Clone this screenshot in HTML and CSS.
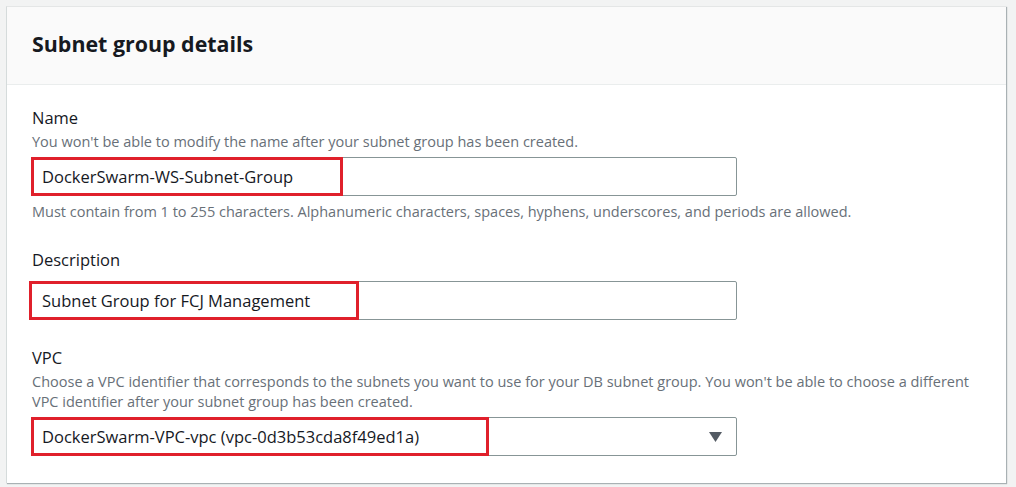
FILE: index.html
```html
<!DOCTYPE html>
<html>
<head>
<meta charset="utf-8">
<link rel="stylesheet" href="styles.css">
</head>
<body>
<div class="page">
  <section class="card">
    <header class="card-header">
      <h2 class="title">Subnet group details</h2>
    </header>
    <div class="card-body">
      <div class="field">
        <div class="label">Name</div>
        <div class="desc">You won't be able to modify the name after your subnet group has been created.</div>
        <div class="input">
          <span class="value">DockerSwarm-WS-Subnet-Group</span>
          <span class="mark mark-name"></span>
        </div>
        <div class="constraint">Must contain from 1 to 255 characters. Alphanumeric characters, spaces, hyphens, underscores, and periods are allowed.</div>
      </div>
      <div class="field">
        <div class="label">Description</div>
        <div class="input">
          <span class="value">Subnet Group for FCJ Management</span>
          <span class="mark mark-desc"></span>
        </div>
      </div>
      <div class="field">
        <div class="label">VPC</div>
        <div class="desc">Choose a VPC identifier that corresponds to the subnets you want to use for your DB subnet group. You won't be able to choose a different VPC identifier after your subnet group has been created.</div>
        <div class="input select">
          <span class="value">DockerSwarm-VPC-vpc (vpc-0d3b53cda8f49ed1a)</span>
          <svg class="caret" width="13" height="10" viewBox="0 0 13 10"><path d="M0 0H13L6.5 10Z" fill="#545b64"/></svg>
          <span class="mark mark-vpc"></span>
        </div>
      </div>
    </div>
  </section>
</div>
</body>
</html>
```

FILE: styles.css
```css
html, body {
  margin: 0;
  padding: 0;
  background: #f2f3f3;
}
body {
  font-family: "Open Sans", "Noto Sans", "Liberation Sans", sans-serif;
  color: #16191f;
}
.page {
  padding: 6px 10px 4px 6px;
}
.card {
  width: 1000px;
  height: 477px;
  box-sizing: border-box;
  background: #ffffff;
  border-top: 1px solid #e4e6e6;
  border-left: 1px solid #d5dbdb;
  box-shadow: 1px 1px 1px 0 rgba(0, 28, 36, 0.3);
  display: flex;
  flex-direction: column;
}
.card-header {
  height: 78px;
  box-sizing: border-box;
  background: #fafafa;
  border-bottom: 1px solid #eaeded;
  padding: 23px 0 0 25px;
}
.title {
  margin: 0;
  font-size: 21.4px;
  font-weight: 700;
  line-height: 28px;
  color: #16191f;
}
.card-body {
  padding: 22px 24px 0 24px;
  display: flex;
  flex-direction: column;
  gap: 27px;
}
.field {
  display: flex;
  flex-direction: column;
  width: 952px;
}
.label {
  font-size: 16.5px;
  line-height: 22px;
  color: #16191f;
  padding-left: 1px;
}
.desc {
  font-size: 14.5px;
  line-height: 20px;
  color: #687078;
  margin-top: 3px;
  margin-bottom: 5px;
  padding-left: 1px;
}
.constraint {
  font-size: 14.5px;
  line-height: 20px;
  color: #687078;
  margin-top: 6px;
  padding-left: 1px;
}
.input {
  position: relative;
  width: 706px;
  height: 39px;
  box-sizing: border-box;
  border: 1px solid #879596;
  border-radius: 2px;
  display: flex;
  align-items: center;
  padding-left: 10px;
  font-size: 16.5px;
  color: #16191f;
}
.field .label + .input {
  margin-top: 10px;
}
.select .caret {
  position: absolute;
  right: 14px;
  top: 14px;
}
.mark {
  position: absolute;
  border: 3px solid #e0202b;
  box-sizing: border-box;
  top: -1px;
  height: 39px;
  left: -1px;
}
.mark-name {
  width: 312px;
}
.mark-desc {
  left: -3px;
  width: 330px;
}
.mark-vpc {
  width: 458px;
}
```
